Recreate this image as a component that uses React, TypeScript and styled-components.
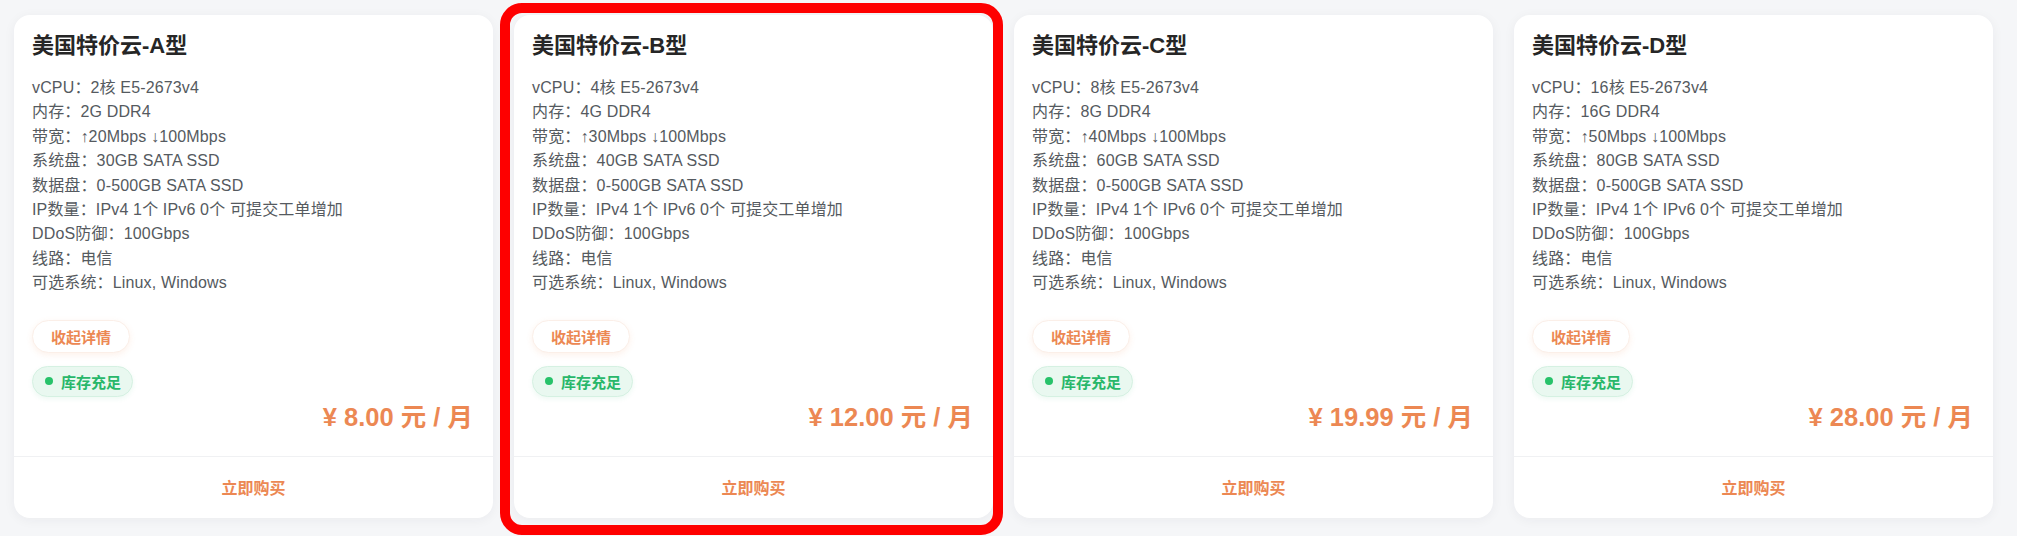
import React from "react";
import styled, { createGlobalStyle } from "styled-components";

const GlobalStyle = createGlobalStyle`
  html, body {
    margin: 0;
    padding: 0;
    background: #f5f6f8;
    font-family: "Liberation Sans", "Noto Sans CJK SC", sans-serif;
  }
  * { box-sizing: border-box; }
`;

const ORANGE = "#ec8853";

const Page = styled.div`
  display: grid;
  grid-template-columns: repeat(4, 479px);
  column-gap: 21px;
  padding: 15px 0 0 14px;
  height: 536px;
  overflow: hidden;
`;

const CardSlot = styled.div`
  position: relative;
  height: 503px;
`;

const Card = styled.div`
  height: 100%;
  background: #ffffff;
  border-radius: 16px;
  box-shadow: 0 2px 12px rgba(30, 40, 60, 0.05);
  display: flex;
  flex-direction: column;
  overflow: hidden;
`;

const Highlight = styled.div`
  position: absolute;
  left: -14px;
  top: -12px;
  right: -10px;
  bottom: -17px;
  border: 10px solid #fe0000;
  border-radius: 22px;
  pointer-events: none;
`;

const Body = styled.div`
  flex: 1;
  display: flex;
  flex-direction: column;
  padding: 16px 20px 23px 18px;
`;

const Title = styled.h3`
  margin: 0;
  font-size: 22px;
  line-height: 30px;
  font-weight: 700;
  color: #262626;
`;

const SpecList = styled.div`
  margin-top: 15px;
  display: flex;
  flex-direction: column;
`;

const SpecLine = styled.div`
  font-size: 16px;
  line-height: 24.4px;
  letter-spacing: 0.15px;
  color: #555a60;
  white-space: nowrap;
`;

const ToggleButton = styled.button`
  margin-top: 24px;
  align-self: flex-start;
  height: 33px;
  padding: 0 18px;
  border-radius: 17px;
  background: #ffffff;
  border: 1px solid #fbefe8;
  box-shadow: 0 2px 6px rgba(236, 136, 83, 0.12);
  color: ${ORANGE};
  font-family: inherit;
  font-size: 15px;
  font-weight: 600;
  cursor: pointer;
`;

const StockBadge = styled.div`
  margin-top: 13px;
  align-self: flex-start;
  height: 31px;
  display: flex;
  align-items: center;
  gap: 8px;
  padding: 0 11px 0 12px;
  border-radius: 16px;
  background: #e9f8f0;
  border: 1px solid #d5f1e2;
  box-shadow: 0 2px 5px rgba(40, 180, 100, 0.08);
  color: #28b76a;
  font-size: 15px;
  font-weight: 700;
`;

const Dot = styled.span`
  width: 8px;
  height: 8px;
  border-radius: 50%;
  background: #27c26a;
`;

const Price = styled.div`
  margin-top: 4px;
  align-self: flex-end;
  font-size: 25.5px;
  line-height: 32px;
  font-weight: 700;
  color: ${ORANGE};
  white-space: pre;
`;

const Footer = styled.div`
  height: 63px;
  border-top: 1px solid #f0f1f3;
  display: flex;
  align-items: center;
  justify-content: center;
  color: ${ORANGE};
  font-size: 16px;
  font-weight: 700;
  cursor: pointer;
`;

type Plan = {
  name: string;
  cores: number;
  mem: string;
  up: number;
  disk: number;
  price: string;
  highlighted?: boolean;
};

const plans: Plan[] = [
  { name: "A", cores: 2, mem: "2G", up: 20, disk: 30, price: "8.00" },
  { name: "B", cores: 4, mem: "4G", up: 30, disk: 40, price: "12.00", highlighted: true },
  { name: "C", cores: 8, mem: "8G", up: 40, disk: 60, price: "19.99" },
  { name: "D", cores: 16, mem: "16G", up: 50, disk: 80, price: "28.00" },
];

const PlanCard: React.FC<{ plan: Plan }> = ({ plan }) => {
  const specs = [
    `vCPU：${plan.cores}核 E5-2673v4`,
    `内存：${plan.mem} DDR4`,
    `带宽：↑${plan.up}Mbps ↓100Mbps`,
    `系统盘：${plan.disk}GB SATA SSD`,
    `数据盘：0-500GB SATA SSD`,
    `IP数量：IPv4 1个 IPv6 0个 可提交工单增加`,
    `DDoS防御：100Gbps`,
    `线路：电信`,
    `可选系统：Linux, Windows`,
  ];
  return (
    <CardSlot>
      <Card>
        <Body>
          <Title>美国特价云-{plan.name}型</Title>
          <SpecList>
            {specs.map((s) => (
              <SpecLine key={s}>{s}</SpecLine>
            ))}
          </SpecList>
          <ToggleButton>收起详情</ToggleButton>
          <StockBadge>
            <Dot />
            库存充足
          </StockBadge>
          <Price>{`¥ ${plan.price} 元 / 月`}</Price>
        </Body>
        <Footer>立即购买</Footer>
      </Card>
      {plan.highlighted && <Highlight />}
    </CardSlot>
  );
};

export default function App() {
  return (
    <>
      <GlobalStyle />
      <Page>
        {plans.map((p) => (
          <PlanCard key={p.name} plan={p} />
        ))}
      </Page>
    </>
  );
}
